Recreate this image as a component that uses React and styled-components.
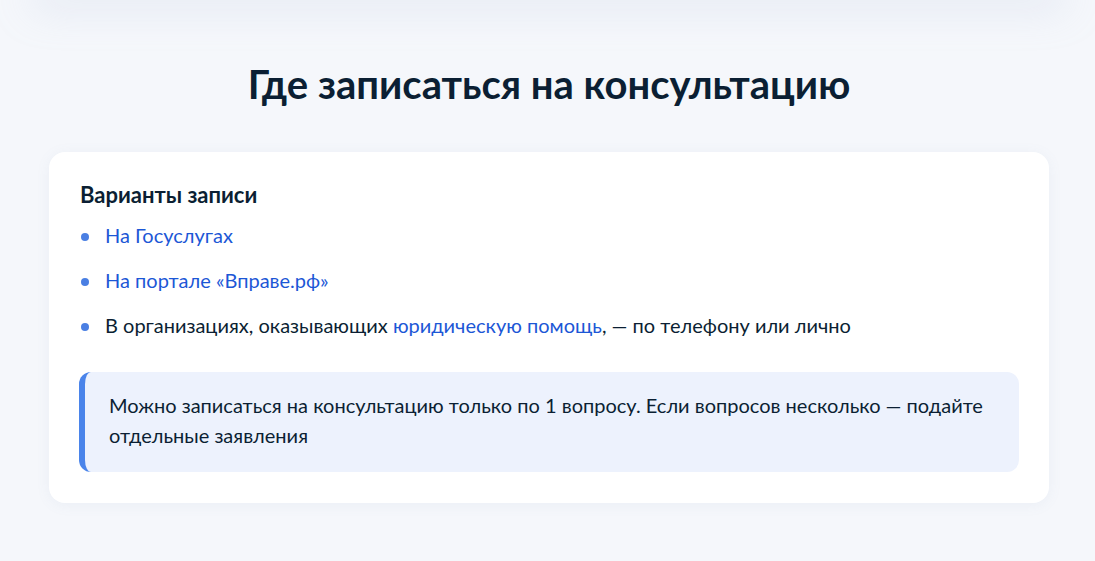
import React from "react";
import styled, { createGlobalStyle } from "styled-components";

const GlobalStyle = createGlobalStyle`
  html, body {
    margin: 0;
    padding: 0;
    background: #f5f7fb;
  }
  body {
    font-family: Lato, "Noto Sans", sans-serif;
    color: #0b1f33;
  }
`;

const Page = styled.div`
  height: 561px;
  box-sizing: border-box;
  overflow: hidden;
  padding: 0 46px 0 49px;
`;

// shadow left by the section above, which is scrolled out of view
const PrevSection = styled.div`
  height: 20px;
  margin: -20px -18px 0;
  border-radius: 24px;
  background: #f8fafc;
  box-shadow: 0 6px 40px rgba(180, 195, 220, 0.35);
`;

const Title = styled.h2`
  margin: 60px 0 44px;
  font-size: 40px;
  line-height: 48px;
  font-weight: 700;
  text-align: center;
`;

const Card = styled.section`
  width: 1000px;
  box-sizing: border-box;
  background: #ffffff;
  border-radius: 16px;
  padding: 29px 30px 31px 31px;
  box-shadow: 0 2px 14px rgba(120, 140, 180, 0.08);
`;

const CardTitle = styled.h3`
  margin: 0 0 13px;
  font-size: 22px;
  line-height: 28px;
  font-weight: 700;
`;

const List = styled.ul`
  list-style: none;
  margin: 0 0 33px;
  padding: 0;
  display: flex;
  flex-direction: column;
  gap: 18px;
`;

const Item = styled.li`
  display: flex;
  align-items: center;
  font-size: 20px;
  line-height: 27px;
`;

const Bullet = styled.span`
  width: 8px;
  height: 8px;
  border-radius: 50%;
  background: #4a7fe3;
  margin: 2px 16px 0 1px;
  flex: none;
`;

const Link = styled.a`
  color: #1c57d6;
  text-decoration: none;
`;

const Note = styled.div`
  margin-left: -1px;
  background: #edf2fd;
  border-left: 6px solid #4a84ea;
  border-radius: 12px;
  padding: 18px 20px 22px 24px;
  font-size: 20px;
  line-height: 30px;
`;

const items = [
  <Link href="#">На Госуслугах</Link>,
  <Link href="#">На портале «Вправе.рф»</Link>,
  <>
    В организациях, оказывающих <Link href="#">юридическую помощь</Link>, — по
    телефону или лично
  </>,
];

export default function App() {
  return (
    <>
      <GlobalStyle />
      <Page>
        <PrevSection />
        <Title>Где записаться на консультацию</Title>
        <Card>
          <CardTitle>Варианты записи</CardTitle>
          <List>
            {items.map((content, i) => (
              <Item key={i}>
                <Bullet />
                <span>{content}</span>
              </Item>
            ))}
          </List>
          <Note>
            Можно записаться на консультацию только по 1 вопросу. Если вопросов
            несколько — подайте отдельные заявления
          </Note>
        </Card>
      </Page>
    </>
  );
}
